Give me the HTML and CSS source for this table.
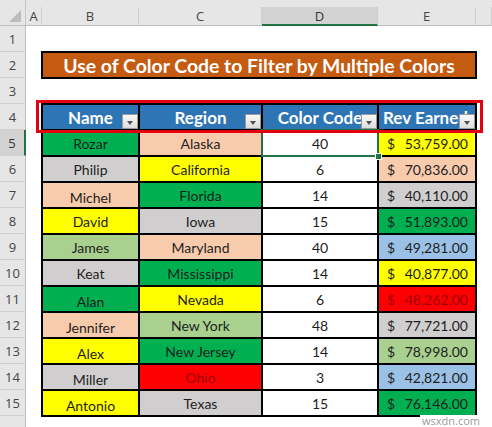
FILE: index.html
```html
<!DOCTYPE html>
<html lang="en">

<head>
    <meta charset="UTF-8">
    <meta name="viewport" content="width=device-width, initial-scale=1.0">
    <title>Filter by Multiple Colors</title>
    <link rel="stylesheet" href="styles.css">
</head>

<body>
    <div class="sheet">
        <div class="corner"><span class="corner-tri"></span></div>
        <div class="col-head"><span class="lbl">A</span></div>
        <div class="col-head"><span class="lbl">B</span></div>
        <div class="col-head"><span class="lbl">C</span></div>
        <div class="col-head"><span class="lbl active">D</span></div>
        <div class="col-head"><span class="lbl">E</span></div>
        <div class="col-head"><span class="lbl"></span></div>

        <div class="row-head">1</div>
        <div class="row-head">2</div>
        <div class="row-head">3</div>
        <div class="row-head">4</div>
        <div class="row-head active">5</div>
        <div class="row-head">6</div>
        <div class="row-head">7</div>
        <div class="row-head">8</div>
        <div class="row-head">9</div>
        <div class="row-head">10</div>
        <div class="row-head">11</div>
        <div class="row-head">12</div>
        <div class="row-head">13</div>
        <div class="row-head">14</div>
        <div class="row-head">15</div>
        <div class="row-head last"></div>

        <div class="title">Use of Color Code to Filter by Multiple Colors</div>

        <div class="table">
            <div class="red-box"></div>

            <div class="th">Name<span class="drop"></span></div>
            <div class="th">Region<span class="drop"></span></div>
            <div class="th">Color Code<span class="drop"></span></div>
            <div class="th left">Rev Earned<span class="drop"></span></div>

            <div class="td green">Rozar</div>
            <div class="td peach">Alaska</div>
            <div class="td selected">40<span class="sel-frame"></span></div>
            <div class="td money yellow"><span>$</span><span>53,759.00</span></div>

            <div class="td gray">Philip</div>
            <div class="td yellow">California</div>
            <div class="td">6</div>
            <div class="td money peach"><span>$</span><span>70,836.00</span></div>

            <div class="td peach bot">Michel</div>
            <div class="td green">Florida</div>
            <div class="td">14</div>
            <div class="td money gray"><span>$</span><span>40,110.00</span></div>

            <div class="td yellow">David</div>
            <div class="td gray">Iowa</div>
            <div class="td">15</div>
            <div class="td money green"><span>$</span><span>51,893.00</span></div>

            <div class="td lgreen">James</div>
            <div class="td peach">Maryland</div>
            <div class="td">40</div>
            <div class="td money blue"><span>$</span><span>49,281.00</span></div>

            <div class="td gray">Keat</div>
            <div class="td green">Mississippi</div>
            <div class="td">14</div>
            <div class="td money yellow"><span>$</span><span>40,877.00</span></div>

            <div class="td green bot">Alan</div>
            <div class="td yellow">Nevada</div>
            <div class="td">6</div>
            <div class="td money red"><span>$</span><span>48,262.00</span></div>

            <div class="td peach bot">Jennifer</div>
            <div class="td lgreen">New York</div>
            <div class="td">48</div>
            <div class="td money gray"><span>$</span><span>77,721.00</span></div>

            <div class="td yellow bot">Alex</div>
            <div class="td green">New Jersey</div>
            <div class="td">14</div>
            <div class="td money lgreen"><span>$</span><span>78,998.00</span></div>

            <div class="td gray bot">Miller</div>
            <div class="td red">Ohio</div>
            <div class="td">3</div>
            <div class="td money blue"><span>$</span><span>42,821.00</span></div>

            <div class="td yellow bot">Antonio</div>
            <div class="td gray">Texas</div>
            <div class="td">15</div>
            <div class="td money green"><span>$</span><span>76,146.00</span></div>
        </div>

        <div class="watermark">wsxdn.com</div>
    </div>
</body>

</html>
```

FILE: styles.css
```css
body {
    margin: 0;
    padding: 0;
    background-color: #fff;
    font-family: Lato, "Open Sans", sans-serif;
}

.sheet {
    position: relative;
    width: 492px;
    height: 427px;
    overflow: hidden;
    display: grid;
    grid-template-columns: 26px 16px 97px 123px 116px 98px 1fr;
    grid-template-rows: 26px repeat(15, 26px) 1fr;
}

/* column letters */
.corner,
.col-head {
    background-color: #e6e6e6;
    padding-top: 7px;
    box-sizing: border-box;
}

.corner {
    border-bottom: 1px solid #bfbfbf;
    border-right: 1px solid #c6c6c6;
    position: relative;
}

.corner-tri {
    position: absolute;
    right: 4px;
    bottom: 3px;
    width: 0;
    height: 0;
    border-left: 12px solid transparent;
    border-bottom: 12px solid #bcbcbc;
}

.col-head .lbl {
    display: flex;
    justify-content: center;
    align-items: center;
    height: 19px;
    box-sizing: border-box;
    border-right: 1px solid #cfcfcf;
    border-bottom: 1px solid #bfbfbf;
    font-family: "Open Sans", sans-serif;
    font-size: 13px;
    color: #444;
}

.col-head .lbl.active {
    background-color: #d2d2d2;
    border-bottom: 2px solid #217346;
    color: #333;
}

/* row numbers */
.row-head {
    grid-column: 1;
    background-color: #e6e6e6;
    border-right: 1px solid #bfbfbf;
    border-bottom: 1px solid #d0d0d0;
    box-sizing: border-box;
    display: flex;
    justify-content: center;
    align-items: center;
    font-family: "Open Sans", sans-serif;
    font-size: 13px;
    color: #444;
}

.row-head.active {
    background-color: #d2d2d2;
    border-right: 2px solid #217346;
    color: #333;
}

.row-head.last {
    border-bottom: none;
}

.title {
    grid-column: 3 / 7;
    grid-row: 3;
    margin: -1px 0 0 -1px;
    width: 436px;
    height: 28px;
    box-sizing: border-box;
    background-color: #c55a11;
    border: 2px solid #000;
    color: #fff;
    font-weight: bold;
    font-size: 19.4px;
    display: flex;
    justify-content: center;
    align-items: center;
}

/* data table */
.table {
    grid-column: 3 / 7;
    grid-row: 5 / 17;
    margin: -1px 0 0 -1px;
    width: 436px;
    box-sizing: border-box;
    border-left: 2px solid #000;
    border-top: 2px solid #000;
    display: grid;
    grid-template-columns: 97px 123px 116px 98px;
    grid-auto-rows: 26px;
    align-self: start;
    position: relative;
}

.red-box {
    position: absolute;
    left: -7px;
    top: -5px;
    width: 447px;
    height: 33px;
    box-sizing: border-box;
    border: 3px solid #e3000f;
    z-index: 2;
}

.th,
.td {
    position: relative;
    box-sizing: border-box;
    border-right: 2px solid #000;
    border-bottom: 2px solid #000;
    display: flex;
    justify-content: center;
    align-items: center;
    white-space: nowrap;
    overflow: hidden;
}

.th {
    background-color: #2e75b6;
    color: #fff;
    font-weight: bold;
    font-size: 17px;
}

.th.left {
    justify-content: flex-start;
    padding-left: 4px;
}

.drop {
    position: absolute;
    right: 0;
    bottom: 0;
    width: 16px;
    height: 15px;
    box-sizing: border-box;
    border: 1px solid #9a9a9a;
    background: linear-gradient(#fafafa, #dcdcdc);
}

.drop::after {
    content: "";
    position: absolute;
    left: 4px;
    top: 6px;
    border-left: 3.5px solid transparent;
    border-right: 3.5px solid transparent;
    border-top: 4px solid #505050;
}

.td {
    font-size: 14px;
    color: #1e1e1e;
    background-color: #fff;
}

.td.bot {
    align-items: flex-end;
    padding-bottom: 1px;
}

.td.money {
    justify-content: space-between;
    padding: 0 7px 0 8px;
}

.green { background-color: #00b050; }
.gray { background-color: #d0cece; }
.peach { background-color: #f8cbad; }
.yellow { background-color: #ffff00; }
.lgreen { background-color: #a9d08e; }
.blue { background-color: #9bc2e6; }
.td.red {
    background-color: #ff0000;
    color: #9c0006;
}

.selected {
    overflow: visible;
}

.sel-frame {
    position: absolute;
    left: -2px;
    top: -2px;
    right: -2px;
    bottom: -2px;
    border: 2px solid #217346;
    z-index: 1;
}

.sel-frame::after {
    content: "";
    position: absolute;
    right: -5px;
    bottom: -5px;
    width: 5px;
    height: 5px;
    background-color: #217346;
    border: 1px solid #fff;
}

.watermark {
    position: absolute;
    right: 10px;
    bottom: 1px;
    padding: 0 2px;
    font-family: "Open Sans", sans-serif;
    font-size: 11px;
    line-height: 11px;
    color: #9a9a9a;
    background-color: #fff;
    z-index: 3;
}
```
